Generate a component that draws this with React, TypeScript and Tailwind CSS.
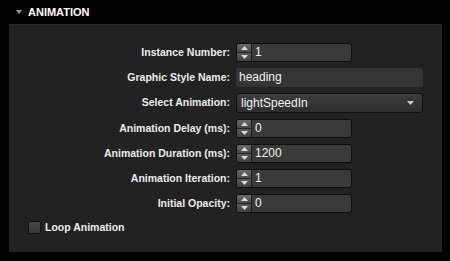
import React from "react";

type Field =
  | { kind: "stepper"; label: string; value: string }
  | { kind: "text"; label: string; value: string }
  | { kind: "select"; label: string; value: string };

const fields: Field[] = [
  { kind: "stepper", label: "Instance Number:", value: "1" },
  { kind: "text", label: "Graphic Style Name:", value: "heading" },
  { kind: "select", label: "Select Animation:", value: "lightSpeedIn" },
  { kind: "stepper", label: "Animation Delay (ms):", value: "0" },
  { kind: "stepper", label: "Animation Duration (ms):", value: "1200" },
  { kind: "stepper", label: "Animation Iteration:", value: "1" },
  { kind: "stepper", label: "Initial Opacity:", value: "0" },
];

const Arrow = ({ up }: { up?: boolean }) => (
  <svg width="7" height="4" viewBox="0 0 7 4" className="block">
    <path d={up ? "M0 4 L3.5 0 L7 4 Z" : "M0 0 L3.5 4 L7 0 Z"} fill="#d8d8d8" />
  </svg>
);

const Stepper = ({ value }: { value: string }) => (
  <div className="flex h-[19px] w-[116px] rounded-[3px] border border-[#0e0e0e] bg-[#3a3a3a]">
    <div className="flex w-[15px] flex-col border-r border-[#1a1a1a]">
      <div className="flex flex-1 items-center justify-center rounded-tl-[2px] border-b border-[#222] bg-gradient-to-b from-[#6a6a6a] to-[#4a4a4a]">
        <Arrow up />
      </div>
      <div className="flex flex-1 items-center justify-center rounded-bl-[2px] bg-gradient-to-b from-[#5a5a5a] to-[#404040]">
        <Arrow />
      </div>
    </div>
    <span className="pl-[3px] text-[12px] leading-[17px] text-[#f2f2f2]">{value}</span>
  </div>
);

const TextBox = ({ value }: { value: string }) => (
  <div className="h-[19px] w-[187px] rounded-[3px] bg-[#353535] pl-[3px] text-[12px] leading-[19px] text-[#f2f2f2]">
    {value}
  </div>
);

const Select = ({ value }: { value: string }) => (
  <div className="flex h-[20px] w-[187px] items-center justify-between rounded-[3px] border border-[#111] bg-gradient-to-b from-[#3c3c3c] to-[#2e2e2e] pl-[4px] pr-[8px]">
    <span className="text-[12px] leading-[18px] text-[#f2f2f2]">{value}</span>
    <svg width="7" height="4" viewBox="0 0 7 4">
      <path d="M0 0 L3.5 4 L7 0 Z" fill="#cfcfcf" />
    </svg>
  </div>
);

export default function App() {
  return (
    <div
      className="h-[261px] w-[450px] bg-[#030303]"
      style={{ fontFamily: '"Liberation Sans", Arial, sans-serif' }}
    >
      <div className="flex h-[24px] items-center pl-[16px]">
        <svg width="6" height="4" viewBox="0 0 6 4" className="mr-[6px]">
          <path d="M0 0 L3 4 L6 0 Z" fill="#9a9a9a" />
        </svg>
        <span className="text-[11px] font-bold text-white">ANIMATION</span>
      </div>
      <div className="ml-[9px] flex h-[228px] w-[433px] flex-col gap-[6px] border-t border-[#2a2a2a] bg-[#222222] pt-[18px]">
        {fields.map((f) => (
          <div key={f.label} className="flex items-center">
            <div className="w-[221px] text-right text-[10.5px] font-bold text-[#ececec]">{f.label}</div>
            <div className="ml-[6px]">
              {f.kind === "stepper" && <Stepper value={f.value} />}
              {f.kind === "text" && <TextBox value={f.value} />}
              {f.kind === "select" && <Select value={f.value} />}
            </div>
          </div>
        ))}
        <div className="mt-[1px] flex items-center pl-[19px]">
          <div className="h-[13px] w-[13px] rounded-[2px] border border-[#111] bg-gradient-to-b from-[#474747] to-[#383838]" />
          <span className="ml-[4px] text-[10.5px] font-bold text-[#ececec]">Loop Animation</span>
        </div>
      </div>
    </div>
  );
}
